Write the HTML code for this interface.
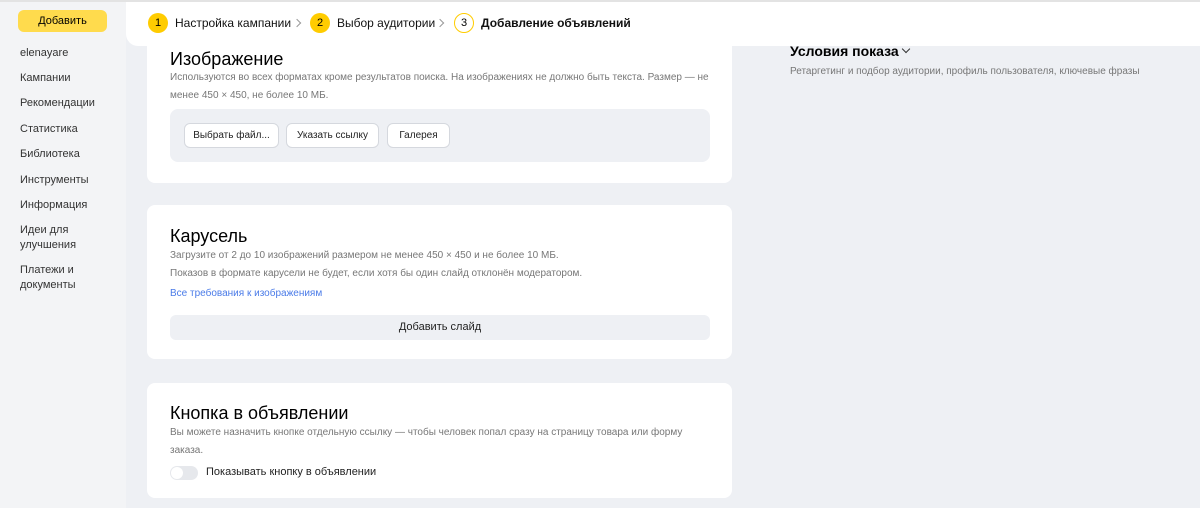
<!DOCTYPE html>
<html><head><meta charset="utf-8"><style>
*{margin:0;padding:0;box-sizing:border-box}
body{width:1200px;height:508px;overflow:hidden;background:#eef0f4;font-family:"Liberation Sans","Noto Sans CJK SC",sans-serif;position:relative;color:#000}
.topline{position:absolute;left:0;top:0;width:1200px;height:2px;background:#e3e3e3;z-index:5}
.side{position:absolute;left:0;top:0;width:126px;height:508px;background:#f3f4f6}
.add{position:absolute;left:18px;top:10px;width:89px;height:22px;background:#ffdb4d;border-radius:6px;font-size:11px;text-align:center;line-height:22px}
.nav{position:absolute;left:20px;font-size:11px;color:#333;line-height:15px}
.hdr{position:absolute;left:126px;top:0;width:1074px;height:46px;background:#fff;border-bottom-left-radius:12px;z-index:3}
.step{position:absolute;top:13px;font-size:12px;line-height:20px;color:#111}
.c{position:absolute;top:13px;width:20px;height:20px;border-radius:50%;background:#ffcc00;font-size:11px;text-align:center;line-height:20px}
.c3{background:#fff;border:1px solid #fc0;line-height:18px}
.ar{position:absolute;top:20px;width:6px;height:6px;border-right:1px solid #999;border-top:1px solid #999;transform:rotate(45deg)}
.card{position:absolute;left:147px;width:585px;background:#fff;border-radius:8px}
h2{position:absolute;left:23px;font-size:18px;font-weight:normal;color:#000}
.t{position:absolute;left:23px;font-size:10px;color:#777;line-height:18px}
.btn{position:absolute;top:123px;height:25px;border:1px solid #d5d8de;border-radius:6px;background:#fff;font-size:10px;text-align:center;line-height:23px;color:#222}
</style></head><body>
<div class="topline"></div>
<div class="side">
<div class="add">Добавить</div>
<div class="nav" style="top:46px">elenayare</div>
<div class="nav" style="top:71px">Кампании</div>
<div class="nav" style="top:96px">Рекомендации</div>
<div class="nav" style="top:122px">Статистика</div>
<div class="nav" style="top:147px">Библиотека</div>
<div class="nav" style="top:173px">Инструменты</div>
<div class="nav" style="top:198px">Информация</div>
<div class="nav" style="top:223px">Идеи для<br>улучшения</div>
<div class="nav" style="top:263px">Платежи и<br>документы</div>
</div>
<div class="hdr">
<div class="c" style="left:22px">1</div><div class="step" style="left:49px">Настройка кампании</div><div class="ar" style="left:168px"></div>
<div class="c" style="left:184px">2</div><div class="step" style="left:211px">Выбор аудитории</div><div class="ar" style="left:311px"></div>
<div class="c c3" style="left:328px">3</div><div class="step" style="left:355px;font-weight:bold">Добавление объявлений</div>
</div>
<div style="position:absolute;left:790px;top:43px;font-size:14px;font-weight:bold;color:#000">Условия показа</div>
<div style="position:absolute;left:903px;top:46px;width:6px;height:6px;border-right:1px solid #333;border-bottom:1px solid #333;transform:rotate(45deg)"></div>
<div style="position:absolute;left:790px;top:66px;font-size:10px;color:#777">Ретаргетинг и подбор аудитории, профиль пользователя, ключевые фразы</div>
<div class="card" style="top:20px;height:163px">
<h2 style="top:29px">Изображение</h2>
<div class="t" style="top:49px">Используются во всех форматах кроме результатов поиска. На изображениях не должно быть текста. Размер — не<br>менее 450 × 450, не более 10 МБ.</div>
<div style="position:absolute;left:23px;top:89px;width:540px;height:53px;background:#eef0f4;border-radius:8px"></div>
<div class="btn" style="left:37px;width:95px;top:103px">Выбрать файл...</div>
<div class="btn" style="left:139px;width:93px;top:103px">Указать ссылку</div>
<div class="btn" style="left:240px;width:63px;top:103px">Галерея</div>
</div>
<div class="card" style="top:205px;height:154px">
<h2 style="top:21px">Карусель</h2>
<div class="t" style="top:42px">Загрузите от 2 до 10 изображений размером не менее 450 × 450 и не более 10 МБ.<br>Показов в формате карусели не будет, если хотя бы один слайд отклонён модератором.</div>
<div class="t" style="top:80px;color:#4a7be8">Все требования к изображениям</div>
<div style="position:absolute;left:23px;top:110px;width:540px;height:25px;background:#eef0f4;border-radius:6px;font-size:11px;text-align:center;line-height:25px;color:#222">Добавить слайд</div>
</div>
<div class="card" style="top:383px;height:115px">
<h2 style="top:20px">Кнопка в объявлении</h2>
<div class="t" style="top:41px">Вы можете назначить кнопке отдельную ссылку — чтобы человек попал сразу на страницу товара или форму<br>заказа.</div>
<div style="position:absolute;left:23px;top:83px;width:28px;height:14px;border-radius:7px;background:#e6e8ec"><div style="width:12px;height:12px;margin:1px;border-radius:50%;background:#fff"></div></div>
<div style="position:absolute;left:59px;top:83px;font-size:11px;color:#222">Показывать кнопку в объявлении</div>
</div>
</body></html>
